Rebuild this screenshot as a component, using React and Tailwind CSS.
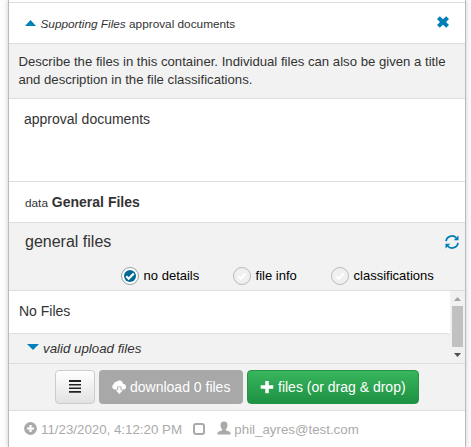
import React from "react";

const CheckMark = () => (
  <svg viewBox="0 0 12 12" className="h-3 w-3">
    <path d="M2.2 6.2 4.7 8.7 9.8 3.5" fill="none" stroke="#fff" strokeWidth="2.2" />
  </svg>
);

function Choice({ label, checked, className }) {
  return (
    <div className={`flex h-[18px] items-center ${className}`}>
      <span
        className={
          checked
            ? "flex h-[18px] w-[18px] items-center justify-center rounded-full border border-[#8fa3ab] bg-white"
            : "flex h-[18px] w-[18px] items-center justify-center rounded-full border border-[#bbb] bg-[#f0f0f0]"
        }
      >
        <span
          className={
            checked
              ? "flex h-3 w-3 items-center justify-center rounded-full bg-[#006a94]"
              : "flex h-3 w-3 items-center justify-center rounded-full"
          }
        >
          <CheckMark />
        </span>
      </span>
      <span className="ml-[4.6px] text-[13px] leading-[18px] text-black">{label}</span>
    </div>
  );
}

export default function App() {
  return (
    <div className="h-[447px] w-[471px] overflow-hidden bg-[#fdfdfd] pl-2 font-['Liberation_Sans',Arial,sans-serif] text-sm whitespace-nowrap text-[#333]">
      <div className="flex h-[447px] w-[458px] flex-col border-x border-[#bbb] bg-white shadow-[0_0_5px_rgba(0,0,0,0.2)]">
        <div className="h-[3px] shrink-0 border-b border-[#ddd]" />

        <header className="flex h-[41px] shrink-0 items-center border-b border-[#ddd] pl-4">
          <svg viewBox="0 0 11 6" className="h-[6px] w-[11px]">
            <path d="M0 6 5.5 0 11 6Z" fill="#007fb8" />
          </svg>
          <span className="ml-[4.5px] pt-px text-[11.8px] leading-5">
            <i>Supporting Files</i> approval documents
          </span>
          <svg viewBox="0 0 12 12" className="mr-[16px] mb-[2px] ml-auto h-3 w-3">
            <path d="M0 3 2.8.3 6 3.3 9.2.3 12 3 9 6 12 9 9.2 11.7 6 8.7 2.8 11.7 0 9 3 6Z" fill="#007fb8" />
          </svg>
        </header>

        <div className="h-[55px] shrink-0 border-b border-[#ddd] bg-[#f2f2f2] pt-[9px] pl-[9.4px] text-[13.16px] leading-[18px]">
          Describe the files in this container. Individual files can also be given a title
          <br />
          and description in the file classifications.
        </div>

        <div className="h-[83px] shrink-0 border-b border-[#ddd] pt-[10px] pl-[15px] leading-5">
          approval documents
        </div>

        <div className="h-[41px] shrink-0 border-b border-[#ddd] pt-[10px] pl-4 leading-5">
          <span className="text-[11.8px]">data</span> <b>General Files</b>
        </div>

        <section className="h-[68px] shrink-0 border-b border-[#ddd] bg-[#f2f2f2]">
          <div className="flex h-[38px] items-center pr-[6px] pl-4">
            <span className="text-base leading-5">general files</span>
            <svg viewBox="0 0 14 14" className="ml-auto h-[14px] w-[14px]" fill="none" stroke="#007fb8" strokeWidth="1.8">
              <path d="M1 6.2A6 6 0 0 1 11.4 3M13 7.8A6 6 0 0 1 2.6 11" />
              <path d="M13.5 0.5V5.3H8.7ZM.5 13.5V8.7H5.3Z" fill="#007fb8" stroke="none" />
            </svg>
          </div>
          <div className="flex h-[30px] items-center pb-[1px] pl-[112px]">
            <Choice label="no details" checked className="w-[112px]" />
            <Choice label="file info" className="w-[98px]" />
            <Choice label="classifications" />
          </div>
        </section>

        <div className="flex h-[73px] shrink-0 border-b border-[#ddd] bg-[#f2f2f2]">
          <div className="min-w-0 flex-1">
            <div className="h-[42px] bg-white pt-[10px] pl-[10px] leading-5">No Files</div>
            <div className="flex h-[30px] items-center rounded-t border-t border-[#ddd] pl-[18px]">
              <svg viewBox="0 0 12 6" className="mb-[3px] h-[6px] w-3">
                <path d="M0 0H12L6 6Z" fill="#007fb8" />
              </svg>
              <i className="ml-1 pt-px text-[13.3px] leading-[18px]">valid upload files</i>
            </div>
          </div>
          <div className="flex w-[15px] flex-col items-center bg-[#f1f1f1] pt-[6px]">
            <svg viewBox="0 0 7 4" className="h-1 w-[7px]">
              <path d="M0 4 3.5 0 7 4Z" fill="#a3a3a3" />
            </svg>
            <span className="mt-[5px] h-[41px] w-[11px] bg-[#c1c1c1]" />
            <svg viewBox="0 0 7 4" className="mt-[6px] h-1 w-[7px]">
              <path d="M0 0H7L3.5 4Z" fill="#505050" />
            </svg>
          </div>
        </div>

        <div className="flex h-[47px] shrink-0 gap-1 border-b border-[#ddd] bg-[#f2f2f2] pt-[6px] pl-[46px] leading-5">
          <button className="flex h-[34px] w-10 items-center justify-center rounded border border-[#ccc] bg-linear-to-b from-white to-[#e2e2e2]">
            <svg viewBox="0 0 12 13" className="mb-px h-[13px] w-3">
              <path d="M0 0H12V2H0ZM0 4H12V5.6H0ZM0 7.4H12V9H0ZM0 11H12V12.7H0Z" fill="#222" />
            </svg>
          </button>
          <button className="flex h-[34px] w-36 items-center rounded bg-[#a8a8a8] pl-[13px] text-white">
            <svg viewBox="0 0 14 14" className="h-[14px] w-[14px]" fill="#fff">
              <path d="M3 9.6A2.9 2.9 0 0 1 1.9 4.1 2 2 0 0 1 4 2.1 4 4 0 0 1 11.2 4.1 2.7 2.7 0 0 1 11.3 9.6H9.4V6.5H5.2V9.6Z" />
              <path d="M6.1 7.3H8.5V10.2H10.8L7.3 14 3.8 10.2H6.1Z" />
            </svg>
            <span className="ml-1">download 0 files</span>
          </button>
          <button className="flex h-[34px] w-[172px] items-center rounded border border-[#259447] bg-linear-to-b from-[#38b65d] to-[#1e9143] pl-3 text-white">
            <svg viewBox="0 0 14 14" className="mb-px h-[14px] w-[14px]">
              <path d="M5.3 1H8.8V5.3H13.3V8.8H8.8V13.3H5.3V8.8H.7V5.3H5.3Z" fill="#fff" />
            </svg>
            <span className="ml-1">files (or drag &amp; drop)</span>
          </button>
        </div>

        <footer className="flex h-9 shrink-0 items-center pl-[15px] text-[13.3px] leading-[18px] text-[#aaa]">
          <svg viewBox="0 0 13 13" className="mb-[2px] h-[13px] w-[13px]">
            <circle cx="6.5" cy="6.5" r="6.4" fill="#aaa" />
            <path d="M6.5 3V10M3 6.5H10" stroke="#fff" strokeWidth="2.2" />
          </svg>
          <span className="ml-1 pt-px">11/23/2020, 4:12:20 PM</span>
          <svg viewBox="0 0 12 12" className="ml-[11px] h-3 w-3">
            <rect x="1" y="1" width="10" height="10" rx="2" fill="none" stroke="#aaa" strokeWidth="2" />
          </svg>
          <svg viewBox="0 0 14 14" className="ml-3 mb-[2px] h-[14px] w-[14px]" fill="#aaa">
            <path d="M.5 13.5V12.2Q.6 11 1.8 10.6L4.8 9.6Q5.4 9.2 5.3 8.6 3.6 6.8 3.5 4.4 3.4.5 7 .5 10.6.5 10.5 4.4 10.4 6.8 8.7 8.6 8.6 9.2 9.2 9.6L12.2 10.6Q13.4 11 13.5 12.2V13.5Z" />
          </svg>
          <span className="ml-[3.4px] pt-px">phil_ayres@test.com</span>
        </footer>
      </div>
    </div>
  );
}
